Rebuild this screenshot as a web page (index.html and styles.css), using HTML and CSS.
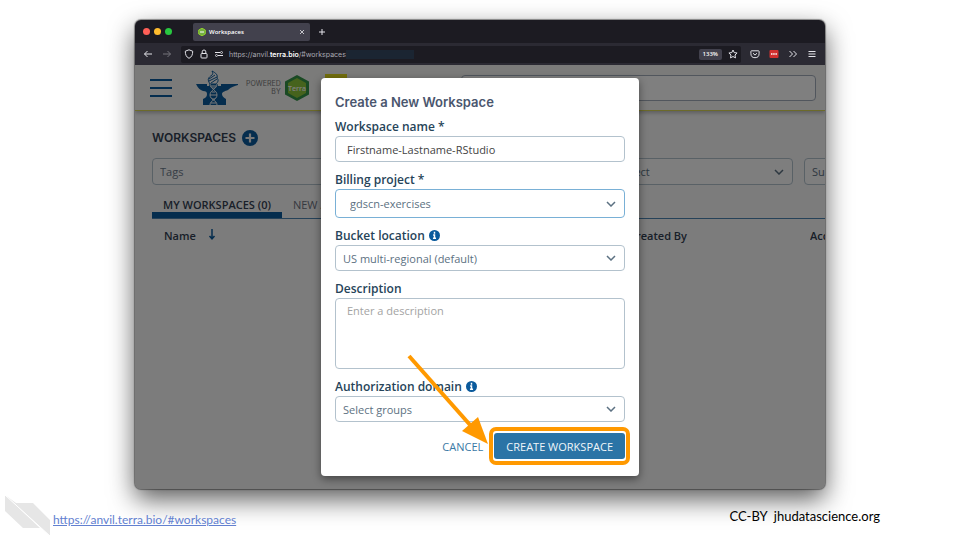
FILE: index.html
```html
<!DOCTYPE html>
<html lang="en">
<head>
<meta charset="utf-8">
<meta name="viewport" content="width=device-width, initial-scale=1">
<title>Workspaces</title>
<link rel="stylesheet" href="styles.css">
</head>
<body>
<div class="slide">
  <main class="browser">
    <div class="tabbar">
      <div class="lights"><i class="light red"></i><i class="light amber"></i><i class="light green"></i></div>
      <div class="tab">
        <svg class="favicon" viewBox="0 0 8 8"><path d="M4 0.2 7.3 2v4L4 7.8 0.7 6V2z" fill="#74ae43" stroke="#8fd12b"/><path d="M2 4h4" stroke="#fff" stroke-width="1.2"/></svg>
        <span class="tab-title">Workspaces</span>
        <button class="icon-btn" aria-label="Close tab"><svg width="6" height="6" viewBox="0 0 6 6"><path d="M1 1l4 4M5 1 1 5" class="line thin"/></svg></button>
      </div>
      <button class="icon-btn" aria-label="New tab"><svg width="8" height="8" viewBox="0 0 8 8"><path d="M4 1v6M1 4h6" class="line"/></svg></button>
    </div>
    <div class="toolbar">
      <button class="icon-btn" aria-label="Back"><svg width="10" height="8" viewBox="0 0 10 8"><path d="M9 4H1.5M4.5 1l-3 3 3 3" class="line"/></svg></button>
      <button class="icon-btn muted" aria-label="Forward"><svg width="10" height="8" viewBox="0 0 10 8"><path d="M1 4h7.500M5.500 1l3 3-3 3" class="line"/></svg></button>
      <div class="address">
        <svg width="10" height="10" viewBox="0 0 10 10"><path d="M5 .8 8.700 2.200C8.800 5.500 7.600 8.200 5 9.300 2.400 8.200 1.200 5.500 1.300 2.200z" class="line"/></svg>
        <svg width="10" height="10" viewBox="0 0 10 10"><rect x="2" y="4.500" width="6" height="4.500" rx=".8" class="line"/><path d="M3.200 4.500V2.800a1.800 1.800 0 0 1 3.600 0v1.700" class="line"/></svg>
        <svg width="10" height="10" viewBox="0 0 10 10"><path d="M1 3.500h5M4 6.500h5" class="line"/><circle cx="7.500" cy="3.500" r="1" class="line thin"/><circle cx="2.500" cy="6.500" r="1" class="line thin"/></svg>
        <span class="url">https://anvil.<b>terra.bio</b>/#workspaces</span>
        <span class="url-glow"></span>
        <span class="zoom-level">133%</span>
        <button class="icon-btn" aria-label="Bookmark"><svg width="10" height="10" viewBox="0 0 10 10"><path d="M5 1l1.200 2.600 2.900.4-2.100 2 .5 2.900L5 7.500 2.500 8.900 3 6 .9 4l2.900-.4z" class="line"/></svg></button>
      </div>
      <button class="icon-btn" aria-label="Pocket"><svg width="10" height="10" viewBox="0 0 10 10"><path d="M1.500 1.800h7a.6.6 0 0 1 .6.600v2.200a4.100 4.100 0 0 1-8.200 0V2.400a.6.600 0 0 1 .6-.6zM3 4.200l2 1.900 2-1.900" class="line"/></svg></button>
      <button class="icon-btn" aria-label="Extension"><svg width="10" height="10" viewBox="0 0 10 10"><rect x=".5" y="1" width="9" height="8" rx="1" fill="#d3302f"/><path d="M2 5h6" stroke="#fff" stroke-width="1.300" stroke-dasharray="1.500 .7"/></svg></button>
      <button class="icon-btn" aria-label="More tools"><svg width="10" height="10" viewBox="0 0 10 10"><path d="M1.500 2l3 3-3 3M5.500 2l3 3-3 3" class="line"/></svg></button>
      <button class="icon-btn" aria-label="Menu"><svg width="10" height="10" viewBox="0 0 10 10"><path d="M1.500 2.500h7M1.500 5h7M1.500 7.500h7" class="line"/></svg></button>
    </div>

    <div class="viewport">
      <div class="app">
        <header class="app-header">
          <button class="icon-btn" aria-label="Main menu"><svg width="24" height="20" viewBox="0 0 24 20"><path d="M1 2h22M1 10h22M1 18h22" stroke="#0a5a9c" stroke-width="2"/></svg></button>
          <svg class="anvil" viewBox="0 0 42 36" role="img" aria-label="AnVIL">
            <path d="M0 14h11v2h2v-2h9v2h3v-2h17v1c-3 1-7 2-10 5-3 1-6 2-6 4s1 3 4 5v6H7v-6c3-1 4-3 4-5s-1-3-4-3c-3-1-5-3-7-7z" fill="#0a5a9c"/>
            <path d="M14 14c-3-5-2-6 2-9 1-1 1-2 0-4 4 2 6 4 5 7 2 2 1 4-1 6z" fill="#f7f7f7" stroke="#0a5a9c"/>
            <path d="M13 9l6-4M13 11l8-4M15 13l6-4" stroke="#0a5a9c"/>
            <path d="M14 14c0 5 7 6 7 11s-7 5-7 10M21 14c0 5-7 6-7 11s7 5 7 10M15 16h5M16 18h3M16 22h3M14 25h7M16 29h3M15 33h5" fill="none" stroke="#f7f7f7"/>
          </svg>
          <span class="powered">POWERED<br>BY</span>
          <svg class="terra" viewBox="0 0 24 26" role="img" aria-labelledby="terra-name">
            <path d="M12 0l12 6.500v13L12 26 0 19.500v-13z" fill="#359448"/>
            <path d="M12 3l9 5v10l-9 5-9-5V8z" fill="#8cc63a"/>
            <text id="terra-name" x="12" y="16" text-anchor="middle">Terra</text>
          </svg>
          <span class="ribbon"></span>
          <input class="search" type="search" aria-label="Search">
        </header>
        <section class="content">
          <h1>WORKSPACES
            <button class="icon-btn" aria-label="Create workspace"><svg width="16" height="16" viewBox="0 0 16 16"><circle cx="8" cy="8" r="8" fill="#0a5a9c"/><path d="M8 3.500v9M3.500 8h9" stroke="#eee" stroke-width="2.200"/></svg></button>
          </h1>
          <div class="filters">
            <input type="text" placeholder="Tags" aria-label="Tags">
            <span class="picker"><select aria-label="Billing project"><option>Billing project</option></select><svg class="chev" viewBox="0 0 10 6"><path d="M1 1l4 4 4-4"/></svg></span>
            <span class="picker"><select aria-label="Submission status"><option>Submission</option></select></span>
          </div>
          <nav class="tabs">
            <a class="active" href="#mine">MY WORKSPACES (0)</a>
            <a href="#new">NEW AND</a>
          </nav>
          <table>
            <thead><tr>
              <th class="col-name">Name <svg width="8" height="11" viewBox="0 0 8 11"><path d="M4 0v9M1.500 7 4 9.800 6.500 7" fill="none" stroke="#0a5a9c" stroke-width="1.500"/></svg></th>
              <th class="col-by">Created By</th>
              <th>Access</th>
            </tr></thead>
          </table>
        </section>
      </div>

      <div class="backdrop">
        <form class="dialog" role="dialog" aria-labelledby="dialog-title">
          <h2 id="dialog-title">Create a New Workspace</h2>
          <div class="field">
            <label for="name">Workspace name *</label>
            <input id="name" type="text" value="Firstname-Lastname-RStudio">
          </div>
          <div class="field">
            <label for="billing">Billing project *</label>
            <span class="picker focused"><select id="billing"><option>gdscn-exercises</option></select><svg class="chev" viewBox="0 0 10 6"><path d="M1 1l4 4 4-4"/></svg></span>
          </div>
          <div class="field">
            <label for="bucket">Bucket location <svg class="info" viewBox="0 0 12 12"><circle cx="6" cy="6" r="6"/><path d="M6 2v2M4.500 5.500H6V9M4.300 9h3.400"/></svg></label>
            <span class="picker"><select id="bucket"><option>US multi-regional (default)</option></select><svg class="chev" viewBox="0 0 10 6"><path d="M1 1l4 4 4-4"/></svg></span>
          </div>
          <div class="field">
            <label for="description">Description</label>
            <textarea id="description" placeholder="Enter a description"></textarea>
          </div>
          <div class="field">
            <label for="domain">Authorization domain <svg class="info" viewBox="0 0 12 12"><circle cx="6" cy="6" r="6"/><path d="M6 2v2M4.500 5.500H6V9M4.300 9h3.400"/></svg></label>
            <span class="picker"><select id="domain"><option>Select groups</option></select><svg class="chev" viewBox="0 0 10 6"><path d="M1 1l4 4 4-4"/></svg></span>
          </div>
          <div class="actions">
            <button type="button" class="cancel">CANCEL</button>
            <span class="callout">
              <button type="button" class="create">CREATE WORKSPACE</button>
              <svg class="arrow" viewBox="0 0 88 96"><path d="M4 5l62 70" stroke="#ff9900" stroke-width="4"/><path d="M57 80l16-14 10 27z" fill="#ff9900"/></svg>
            </span>
          </div>
        </form>
      </div>
    </div>
  </main>

  <footer>
    <svg class="mark" viewBox="0 0 46 42"><path d="M0 0l45 41V25L28 8H11zM0 0v16l18 17h17z" fill="#e6e6e6"/><path d="M0 0l45 41" stroke="#fff"/></svg>
    <a class="source" href="https://anvil.terra.bio/#workspaces">https://anvil.terra.bio/#workspaces</a>
    <span class="credit">CC-BY&nbsp; jhudatascience.org</span>
  </footer>
</div>
</body>
</html>
```
FILE: styles.css
```css
* { box-sizing: border-box; }

body {
  margin: 0;
  background: #fff;
  font-family: "Open Sans", Inter, sans-serif;
  font-size: 11px;
  color: #333f52;
}

button, input, select, textarea { font: inherit; color: inherit; margin: 0; }
svg { display: block; flex: none; }

.icon-btn {
  display: flex;
  padding: 0;
  border: 0;
  background: none;
}

.line { fill: none; stroke: #e4e4ea; stroke-width: 1; }
.thin { stroke-width: 0.8; }
.muted { opacity: 0.4; }

.slide {
  display: flex;
  flex-direction: column;
  min-height: 100vh;
  padding-top: 20px;
}

/* Browser window */
.browser {
  flex: 1;
  display: flex;
  flex-direction: column;
  width: 72%;
  max-width: calc(100% - 270px);
  margin: 0 auto;
  border-radius: 6px;
  overflow: hidden;
  background: #1c1b22;
  box-shadow: 0 0 1px 1px rgba(0, 0, 0, 0.4), 0 10px 26px rgba(0, 0, 0, 0.65);
}

.tabbar {
  display: flex;
  align-items: center;
  gap: 8px;
  height: 23px;
  padding-left: 8px;
}

.lights { display: flex; gap: 4px; margin-right: 13px; }
.light { width: 7px; height: 7px; border-radius: 50%; }
.red { background: #ff5f57; }
.amber { background: #febc2e; }
.green { background: #28c840; }

.tab {
  display: flex;
  align-items: center;
  gap: 3px;
  width: 117px;
  height: 18px;
  padding: 0 5px;
  border-radius: 2px;
  background: #42414d;
}

.favicon { width: 8px; height: 8px; }
.tab-title { flex: 1; color: #fff; font-size: 6px; font-weight: 600; }

.toolbar {
  display: flex;
  align-items: center;
  gap: 9px;
  height: 22px;
  padding: 0 8px;
  background: #2b2a33;
}

.address {
  flex: 1;
  display: flex;
  align-items: center;
  gap: 5px;
  height: 17px;
  padding: 0 3px;
  border-radius: 2px;
  background: #1c1b22;
}

.url { color: #a9a9b3; font-family: Inter, sans-serif; font-size: 7px; }
.url b { color: #fff; font-weight: 600; }
.url-glow { width: 68px; height: 9px; margin-left: -5px; background: #1b2532; }

.zoom-level {
  margin-left: auto;
  margin-right: 1px;
  padding: 0 4px;
  border-radius: 2px;
  background: #42414d;
  color: #fff;
  font-size: 6px;
  font-weight: 600;
  line-height: 11px;
}

/* Application behind the dialog */
.viewport { flex: 1; display: grid; grid-template-columns: minmax(0, 1fr); }
.app, .backdrop { grid-area: 1 / 1; }
.app { overflow: hidden; background: #f9f9f9; }

.app-header {
  display: flex;
  align-items: center;
  height: 46px;
  padding: 0 9px 0 14px;
  border-bottom: 1px solid #d8d455;
  background: #f7f7f5;
  box-shadow: 0 2px 4px rgba(0, 0, 0, 0.25);
}

.anvil { width: 42px; height: 36px; margin-left: 23px; }

.powered {
  margin: 0 4px 0 8px;
  color: #777;
  font-family: Inter, sans-serif;
  font-size: 7px;
  line-height: 8px;
  text-align: right;
}

.terra { width: 24px; height: 26px; }
.terra text { fill: #fff; font-size: 7px; font-weight: 600; }
.ribbon { align-self: flex-start; width: 22px; height: 16px; margin: 9px 114px 0 16px; background: #e4dc1a; }

.search {
  flex: 1;
  min-width: 0;
  height: 26px;
  border: 1px solid #a3adbb;
  border-radius: 4px;
  background: #fff;
}

.content { padding: 18px 0 0 17px; }

h1, h2 { font-family: Inter, sans-serif; font-weight: 600; }

h1 {
  display: flex;
  align-items: center;
  gap: 6px;
  margin: 0 0 12px;
  font-size: 12px;
  line-height: 17px;
}

.filters {
  display: grid;
  grid-template-columns: 409px 221px 221px;
  gap: 11px;
  color: #6d7a8b;
}

.filters input, .filters .picker select { height: 27px; background: #fcfcfc; }
.filters input::placeholder { color: #6d7a8b; }

.tabs {
  display: flex;
  height: 34px;
  border-bottom: 1px solid #4d84b3;
  font-weight: 500;
}

.tabs a {
  padding: 13px 11px 0;
  color: #6d7280;
  text-decoration: none;
  line-height: 14px;
}

.tabs .active { border-bottom: 6px solid #0a5a9c; color: #333f52; font-weight: 600; }

table { width: 100%; border-spacing: 0; table-layout: fixed; }
th { padding: 0; text-align: left; font-weight: 600; line-height: 34px; white-space: nowrap; overflow: hidden; }
.col-name { width: 477px; padding-left: 12px; }
.col-name svg { display: inline-block; margin-left: 9px; }
.col-by { width: 181px; }

/* Form controls */
.field input, .field textarea, .filters input, .picker select {
  width: 100%;
  border: 1px solid #b3c2cd;
  border-radius: 4px;
}

.picker { display: grid; align-items: center; }
.picker > * { grid-area: 1 / 1; }
.picker select { height: 26px; padding: 0 7px; appearance: none; background: #fff; color: #5c7182; }
.filters input { padding: 0 7px; }

.chev {
  justify-self: end;
  width: 10px;
  height: 6px;
  margin-right: 9px;
  fill: none;
  stroke: #5c7182;
  stroke-width: 1.5;
  pointer-events: none;
}

/* Dialog */
.backdrop {
  z-index: 1;
  display: flex;
  justify-content: center;
  align-items: flex-start;
  padding: 13px;
  background: rgba(0, 0, 0, 0.5);
}

.dialog {
  width: 318px;
  padding: 15px 14px 17px;
  border-radius: 4px;
  background: #fff;
  box-shadow: 0 3px 8px rgba(0, 0, 0, 0.45);
}

h2 { margin: 0 0 7px; color: #4a566e; font-size: 13px; line-height: 18px; }
.field { margin-bottom: 9px; }
.field label { display: flex; align-items: center; gap: 4px; height: 17px; margin-bottom: 1px; color: #264459; font-size: 12px; font-weight: 600; }
.field input { display: block; height: 26px; padding: 0 11px; color: #444; }
.field .focused select { height: 29px; padding: 0 14px; border-color: #79b0d6; }
.field textarea { display: block; height: 71px; padding: 4px 11px; resize: none; }
.field textarea::placeholder { color: #a3a3a3; }

.info { width: 11px; height: 11px; fill: #0a5a9c; }
.info path { fill: none; stroke: #fff; stroke-width: 1.6; }

.actions { display: flex; justify-content: flex-end; gap: 11px; padding-top: 2px; }
.cancel { padding: 0; border: 0; background: none; color: #3a78a5; font-weight: 500; }
.callout { position: relative; }

.create {
  height: 26px;
  padding: 0 12px;
  border: 0;
  border-radius: 3px;
  background: #2b74a6;
  color: #f0f6fa;
  font-weight: 500;
}

/* Ring and arrow that point out the button */
.callout::after {
  content: "";
  position: absolute;
  inset: -6px -5px;
  border: 4px solid #ff9900;
  border-radius: 7px;
}

.arrow { position: absolute; z-index: 1; left: -89px; top: -82px; width: 88px; height: 96px; pointer-events: none; }

/* Slide footer */
footer {
  display: flex;
  align-items: center;
  padding: 6px 80px 3px 5px;
  font-family: Lato, sans-serif;
}

.mark { width: 46px; height: 42px; }
.source { padding-top: 6px; margin-left: 2px; color: #6280d0; font-size: 12px; }
.credit { margin-left: auto; color: #000; font-size: 13px; }
```
